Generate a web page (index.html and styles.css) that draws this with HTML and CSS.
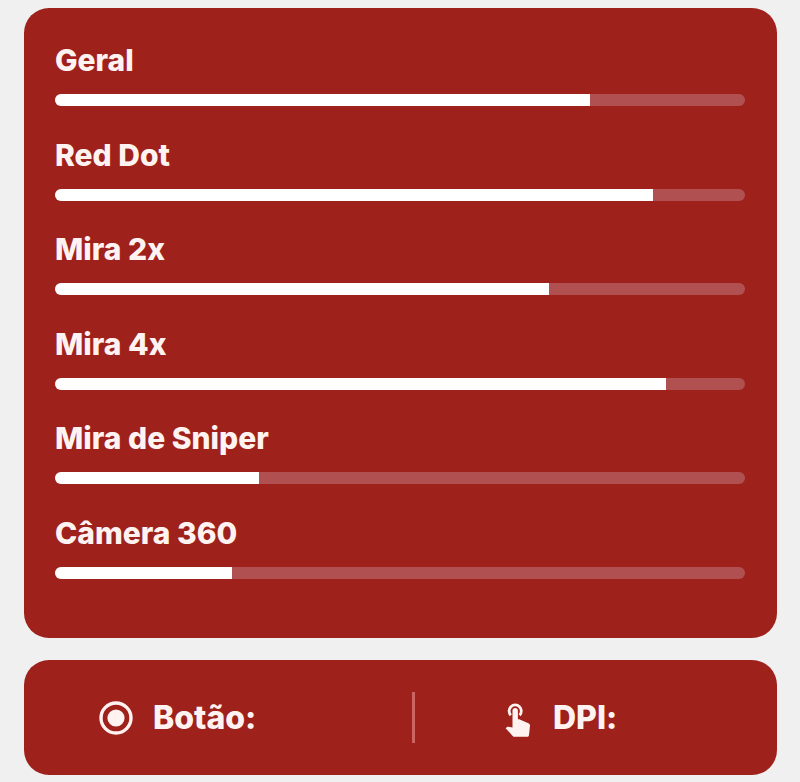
FILE: index.html
```
<!DOCTYPE html>
<html lang="pt-BR">
<head>
	<meta charset="UTF-8">
	<title>Sensibilidade</title>
	<meta name="viewport" content="width=device-width,initial-scale=1">
	<link rel="stylesheet" href="styles.css">
</head>
<body>
	<main class="card levels">
		<div class="level">
			<label for="geral">Geral</label>
			<progress id="geral" class="bar" value="775" max="1000"></progress>
		</div>
		<div class="level">
			<label for="red_dot">Red Dot</label>
			<progress id="red_dot" class="bar" value="866" max="1000"></progress>
		</div>
		<div class="level">
			<label for="mira_2x">Mira 2x</label>
			<progress id="mira_2x" class="bar" value="716" max="1000"></progress>
		</div>
		<div class="level">
			<label for="mira_4x">Mira 4x</label>
			<progress id="mira_4x" class="bar" value="886" max="1000"></progress>
		</div>
		<div class="level">
			<label for="sniper">Mira de Sniper</label>
			<progress id="sniper" class="bar" value="296" max="1000"></progress>
		</div>
		<div class="level">
			<label for="camera">Câmera 360</label>
			<progress id="camera" class="bar" value="256" max="1000"></progress>
		</div>
	</main>

	<footer class="card info">
		<div class="info_item">
			<svg class="icon" viewBox="0 0 34 34" aria-hidden="true">
				<circle cx="17" cy="17" r="15" fill="none" stroke="currentColor" stroke-width="3.4"/>
				<circle cx="17" cy="17" r="8.6" fill="currentColor"/>
			</svg>
			<span>Botão:</span>
		</div>
		<div class="divider"></div>
		<div class="info_item info_dpi">
			<svg class="icon_touch" viewBox="0 -4 26 38" aria-hidden="true">
				<path d="M5.8 12.2A6.1 6.1 0 1 1 14.6 12.2" fill="none" stroke="currentColor" stroke-width="2.8"/>
				<path d="M7.5 7.6a2.7 2.7 0 0 1 5.4 0v8.7h1.3l9.2 3.9c1.2.5 1.7 1.3 1.6 2.5l-1 9.2c-.1 1.2-.9 1.9-2 1.9H9.6c-.8 0-1.4-.3-1.9-.9L.6 25.3l1.2-1.1c.5-.5 1.1-.6 1.7-.5l4 .8z" fill="currentColor"/>
			</svg>
			<span>DPI:</span>
		</div>
	</footer>
</body>
</html>
```

FILE: styles.css
```
*{
	box-sizing: border-box;
}
body{
	display: flex;
	flex-direction: column;
	gap: 22px;
	min-height: 100vh;
	margin: 0;
	padding: 8px 23px 7px 24px;
	background: #f0f0f0;
	color: #fff3f1;
	font-family: Inter, "Liberation Sans", sans-serif;
	font-feature-settings: "calt" 0;
}
.card{
	background: #9e211b;
	border-radius: 25px;
}
.levels{
	flex: 1;
	display: flex;
	flex-direction: column;
	justify-content: space-between;
	gap: 16px;
	padding: 34px 32px 59px 31px;
}
.level{
	display: flex;
	flex-direction: column;
	gap: 16px;
	font-size: 30px;
	font-weight: 800;
	line-height: 36px;
}
.bar{
	-webkit-appearance: none;
	appearance: none;
	display: block;
	width: 100%;
	height: 12px;
	border: none;
	border-radius: 6px;
	overflow: hidden;
	background: #b15050;
}
.bar::-webkit-progress-bar{
	background: #b15050;
}
.bar::-webkit-progress-value{
	background: #fff;
}
.info{
	display: grid;
	grid-template-columns: 15fr 3px 14fr;
	align-items: center;
	padding: 32px 0;
	font-size: 32px;
	font-weight: 800;
}
.info_item{
	display: flex;
	align-items: center;
	gap: 20px;
	padding-left: 75px;
}
.info_dpi{
	gap: 22px;
	padding-left: 90px;
}
.icon{
	width: 34px;
	height: 34px;
}
.icon_touch{
	width: 26px;
	height: 38px;
}
.divider{
	height: 51px;
	background: #cb6561;
}
```
